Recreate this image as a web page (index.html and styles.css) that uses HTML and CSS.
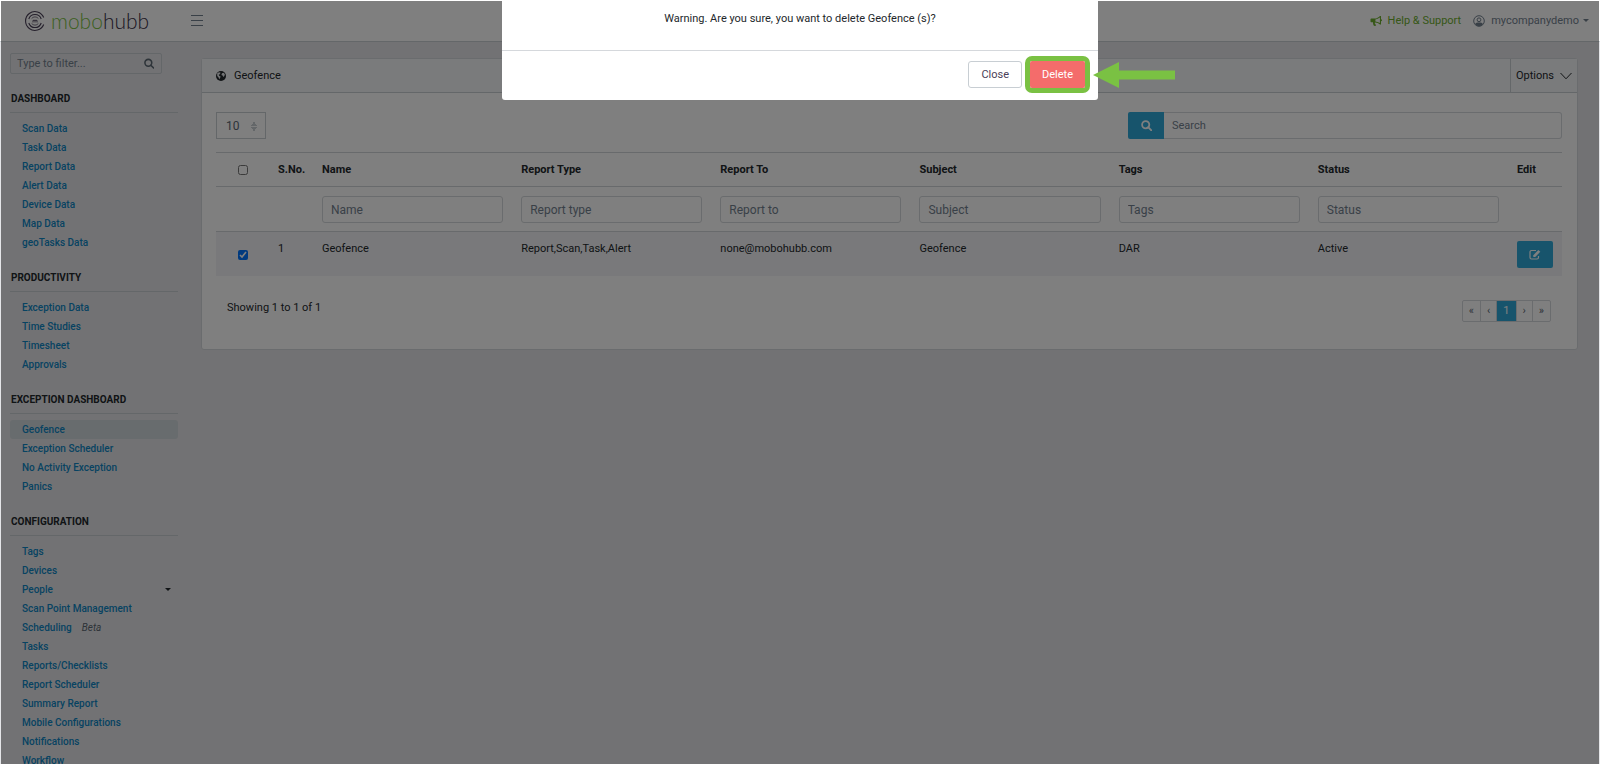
FILE: index.html
```
<!DOCTYPE html>
<html lang="en">
<head>
  <meta charset="UTF-8">
  <title>mobohubb - Geofence</title>
  <link rel="stylesheet" href="styles.css">
</head>
<body>

  <header class="app-header">
    <a class="brand" href="#">
      <svg width="20" height="20" viewBox="0 0 20 20" fill="none" stroke="#4a4058" stroke-width="1.1">
        <path d="M18.700 6.500A9.400 9.400 0 1 0 18.700 13.500"/>
        <path d="M16.200 8A6.500 6.500 0 0 0 3.800 8M3.800 12A6.500 6.500 0 0 0 16.200 12"/>
        <path d="M6.600 7.600A4.200 4.200 0 0 1 13.400 7.600M6.600 12.400A4.200 4.200 0 0 0 13.400 12.400" stroke-width=".7"/>
        <path d="M8 11.500V9.300h4v2.200M10 9.300v2.200" stroke-width=".9"/>
      </svg>
      <span class="brand-text"><span class="brand-green">mobo</span>hubb</span>
    </a>
    <button class="menu-toggle" type="button" aria-label="Toggle menu">
      <svg width="12" height="12" viewBox="0 0 12 12" stroke="#73818f" stroke-width="1"><path d="M0 .500h12M0 5.500h12M0 10.500h12"/></svg>
    </button>
    <nav class="header-nav">
      <a class="help-link" href="#">
        <svg width="12" height="12" viewBox="0 0 12 12" fill="currentColor"><path d="M11 1v8.500h-1C8.600 8.200 6.900 7.500 5.100 7.400c-.500.400-.400.900 0 1.400.2.700.7 1 1.100 1.500-.6.800-1.800.700-2.500.3C3.200 9.400 2.900 8.500 3 7.300H1.600C.9 7.300.5 6.900.5 6.300V4.600c0-.6.400-1 1.100-1h3.100C6.700 3.500 8.500 2.600 10 1zM9.900 2.500C8.500 3.600 7 4.300 5.400 4.500v2C7 6.600 8.500 7.200 9.900 8.100z" fill-rule="evenodd"/><path d="M11 4.300c.7.100 1 .500 1 1s-.300.900-1 1z"/></svg>
        Help &amp; Support
      </a>
      <a class="user-link" href="#">
        <svg width="12" height="12" viewBox="0 0 12 12"><circle cx="6" cy="6" r="5.300" fill="none" stroke="currentColor" stroke-width="1"/><circle cx="6" cy="4.800" r="1.900" fill="none" stroke="currentColor"/><path d="M2 9.300C2.700 7.900 4 7.600 6 7.600s3.300.300 4 1.700A5 5 0 0 1 6 11.300 5 5 0 0 1 2 9.300z" fill="currentColor"/></svg>
        mycompanydemo
        <span class="caret"></span>
      </a>
    </nav>
  </header>

  <div class="app-body">
    <aside class="sidebar">
      <form class="filter">
        <input type="text" placeholder="Type to filter..." aria-label="Type to filter">
        <svg width="11" height="11" viewBox="0 0 11 11" fill="none" stroke="#5c6873" stroke-width="1.700"><circle cx="4.700" cy="4.700" r="3.700"/><path d="M7.400 7.400l3 3" stroke-linecap="round"/></svg>
      </form>

      <h2>Dashboard</h2>
      <ul>
        <li><a href="#">Scan Data</a></li>
        <li><a href="#">Task Data</a></li>
        <li><a href="#">Report Data</a></li>
        <li><a href="#">Alert Data</a></li>
        <li><a href="#">Device Data</a></li>
        <li><a href="#">Map Data</a></li>
        <li><a href="#">geoTasks Data</a></li>
      </ul>

      <h2>Productivity</h2>
      <ul>
        <li><a href="#">Exception Data</a></li>
        <li><a href="#">Time Studies</a></li>
        <li><a href="#">Timesheet</a></li>
        <li><a href="#">Approvals</a></li>
      </ul>

      <h2>Exception Dashboard</h2>
      <ul>
        <li class="active"><a href="#">Geofence</a></li>
        <li><a href="#">Exception Scheduler</a></li>
        <li><a href="#">No Activity Exception</a></li>
        <li><a href="#">Panics</a></li>
      </ul>

      <h2>Configuration</h2>
      <ul>
        <li><a href="#">Tags</a></li>
        <li><a href="#">Devices</a></li>
        <li><a href="#">People</a><span class="caret"></span></li>
        <li><a href="#">Scan Point Management</a></li>
        <li><a href="#">Scheduling</a><em>Beta</em></li>
        <li><a href="#">Tasks</a></li>
        <li><a href="#">Reports/Checklists</a></li>
        <li><a href="#">Report Scheduler</a></li>
        <li><a href="#">Summary Report</a></li>
        <li><a href="#">Mobile Configurations</a></li>
        <li><a href="#">Notifications</a></li>
        <li><a href="#">Workflow</a></li>
      </ul>
    </aside>

    <main class="main">
      <section class="card">
        <div class="card-header">
          <svg width="10" height="10" viewBox="0 0 10 10"><circle cx="5" cy="5" r="5" fill="#23282c"/><path d="M1.200 2.300L3 1.300l1.600.500-.8 1.400-1 .600.400.900 1.400.800-.500 1.500-.900 1.200-.600-1.800L1.200 5zM6 2.300l1.600-.600 1.300 1.600-.500 1.700-1 1-.8-1.500-1.200-.600z" fill="#e4e7ea"/></svg>
          <h1>Geofence</h1>
          <button class="options" type="button">Options
            <svg width="12" height="8" viewBox="0 0 12 8" fill="none" stroke="currentColor" stroke-width="1"><path d="M.500 1L6 6.800 11.500 1"/></svg>
          </button>
        </div>

        <div class="card-body">
          <div class="toolbar">
            <select class="page-size" aria-label="Rows per page">
              <option>10</option>
              <option>25</option>
              <option>50</option>
            </select>
            <form class="search">
              <button class="btn-primary" type="button" aria-label="Search">
                <svg width="11" height="11" viewBox="0 0 11 11" fill="none" stroke="currentColor" stroke-width="1.800"><circle cx="4.700" cy="4.700" r="3.600"/><path d="M7.400 7.400l3 3" stroke-linecap="round"/></svg>
              </button>
              <input type="text" placeholder="Search" aria-label="Search text">
            </form>
          </div>

          <table>
            <colgroup>
              <col class="col-check">
              <col class="col-no">
              <col span="6">
              <col class="col-edit">
            </colgroup>
            <thead>
              <tr>
                <th class="check"><input type="checkbox" aria-label="Select all"></th>
                <th>S.No.</th>
                <th>Name</th>
                <th>Report Type</th>
                <th>Report To</th>
                <th>Subject</th>
                <th>Tags</th>
                <th>Status</th>
                <th>Edit</th>
              </tr>
              <tr>
                <td></td>
                <td></td>
                <td><input type="text" placeholder="Name" aria-label="Name"></td>
                <td><input type="text" placeholder="Report type" aria-label="Report type"></td>
                <td><input type="text" placeholder="Report to" aria-label="Report to"></td>
                <td><input type="text" placeholder="Subject" aria-label="Subject"></td>
                <td><input type="text" placeholder="Tags" aria-label="Tags"></td>
                <td><input type="text" placeholder="Status" aria-label="Status"></td>
                <td></td>
              </tr>
            </thead>
            <tbody>
              <tr>
                <td class="check"><input type="checkbox" aria-label="Select Geofence" checked></td>
                <td>1</td>
                <td>Geofence</td>
                <td>Report,Scan,Task,Alert</td>
                <td>none@mobohubb.com</td>
                <td>Geofence</td>
                <td>DAR</td>
                <td>Active</td>
                <td>
                  <button class="btn-primary" type="button" aria-label="Edit">
                    <svg width="12" height="11" viewBox="0 0 12 11" fill="none" stroke="currentColor"><path d="M7 1.500H2.500a1.500 1.500 0 0 0-1.500 1.500v5.500A1.500 1.500 0 0 0 2.500 10H8a1.500 1.500 0 0 0 1.500-1.500V7" stroke-width="1.200"/><path d="M4.300 8V6.200L9.300 1l2 1.800L6.200 8z" fill="currentColor" stroke="none"/></svg>
                  </button>
                </td>
              </tr>
            </tbody>
          </table>

          <div class="table-footer">
            <span>Showing 1 to 1 of 1</span>
            <nav class="pagination">
              <a href="#">«</a>
              <a href="#">‹</a>
              <a class="current" href="#">1</a>
              <a href="#">›</a>
              <a href="#">»</a>
            </nav>
          </div>
        </div>
      </section>
    </main>
  </div>

  <div class="backdrop"></div>

  <div class="modal" role="dialog" aria-modal="true" aria-labelledby="modal-text">
    <p class="modal-body" id="modal-text">Warning. Are you sure, you want to delete Geofence (s)?</p>
    <div class="modal-footer">
      <button class="btn-close" type="button">Close</button>
      <div class="callout">
        <button class="btn-delete" type="button">Delete</button>
        <svg class="arrow" width="82" height="26" viewBox="0 0 82 26"><path d="M0 13L26 0v8.500h56v9H26V26z" fill="#7ac143"/></svg>
      </div>
    </div>
  </div>

</body>
</html>
```
FILE: styles.css
```
* {
  box-sizing: border-box;
}

body {
  margin: 0;
  height: 100vh;
  display: flex;
  flex-direction: column;
  overflow: hidden;
  background: #e4e5e8;
  color: #23282c;
  font-family: Roboto, "Liberation Sans", sans-serif;
  font-size: 11px;
  line-height: 16px;
}

a {
  text-decoration: none;
  color: inherit;
}

button, input, select {
  font-family: inherit;
  font-size: 11px;
  line-height: 16px;
}

input[type="text"] {
  width: 100%;
  min-width: 0;
  height: 27px;
  padding: 0 8px;
  border: 1px solid #d5d8dc;
  border-radius: 3px;
  background: transparent;
  color: #5c6873;
}

input::placeholder {
  color: #73818f;
  opacity: 1;
}

input[type="checkbox"] {
  width: 10px;
  height: 10px;
  margin: 0;
}

.caret {
  width: 0;
  border: 3px solid transparent;
  border-top-color: currentColor;
  border-bottom: 0;
}

/* header */
.app-header {
  flex: none;
  display: flex;
  align-items: center;
  height: 42px;
  padding: 0 11px 0 25px;
  background: #fff;
  border-bottom: 1px solid #c8ced3;
}

.brand {
  display: flex;
  align-items: center;
  gap: 6px;
  width: 166px;
}

.brand-text {
  font-family: Lato, sans-serif;
  font-size: 21px;
  font-weight: 300;
  line-height: 24px;
  color: #3a3048;
}

.brand-green {
  color: #7ac143;
}

.menu-toggle {
  display: flex;
  padding: 0;
  border: 0;
  background: none;
}

.header-nav {
  display: flex;
  gap: 12px;
  margin-left: auto;
}

.header-nav a {
  display: flex;
  align-items: center;
  gap: 6px;
}

.help-link {
  color: #6cae2e;
}

.user-link {
  color: #73818f;
}

.user-link .caret {
  margin-left: -2px;
}

.app-body {
  flex: 1;
  display: flex;
  min-height: 0;
}

/* sidebar */
.sidebar {
  flex: none;
  width: 201px;
  padding: 11px 23px 0 10px;
  overflow: hidden;
}

.filter {
  display: flex;
  align-items: center;
  width: 152px;
  height: 21px;
  padding-right: 7px;
  border: 1px solid #c8ced3;
  border-radius: 2px;
}

.filter input[type="text"] {
  height: 19px;
  padding: 0 6px;
  border: 0;
}

.sidebar h2 {
  margin: 17px 0 6px;
  padding: 0 1px 5px;
  border-bottom: 1px solid #c8ced3;
  font-size: 10px;
  line-height: 16px;
  font-weight: 700;
  text-transform: uppercase;
}

.sidebar ul {
  margin: 0;
  padding: 0 0 1px;
  list-style: none;
}

.sidebar li {
  display: flex;
  align-items: center;
  height: 19px;
  padding: 0 7px 0 12px;
  border-radius: 3px;
  font-size: 10px;
}

.sidebar li a {
  color: #0f86c4;
  font-weight: 500;
}

.sidebar li .caret {
  margin-left: auto;
}

.sidebar li em {
  margin-left: 10px;
  color: #5c6873;
}

.sidebar .active {
  background: #d1d8dc;
}

/* main card */
.main {
  flex: 1;
  min-width: 0;
  padding: 16px 22px 0 0;
}

.card {
  background: #fff;
  border: 1px solid #d5d8dc;
  border-radius: 3px;
}

.card-header {
  display: flex;
  align-items: center;
  gap: 8px;
  height: 34px;
  padding-left: 14px;
  background: #f5f6f8;
  border-bottom: 1px solid #c8ced3;
}

.card-header h1 {
  margin: 0;
  font-size: 11px;
  font-weight: 400;
}

.options {
  display: flex;
  align-items: center;
  gap: 6px;
  height: 100%;
  margin-left: auto;
  padding: 0 5px;
  border: 0;
  border-left: 1px solid #c8ced3;
  background: none;
  color: #23282c;
}

.card-body {
  padding: 19px 15px 27px 14px;
}

.toolbar {
  display: flex;
  justify-content: space-between;
  margin-bottom: 13px;
}

.page-size {
  appearance: none;
  width: 50px;
  height: 27px;
  padding: 0 9px;
  border: 1px solid #c8ced3;
  border-radius: 0;
  color: #5c6873;
  font-size: 12px;
  background:
    linear-gradient(to top right, transparent 50%, #c8ced3 0) 34px 14px / 3px 5px no-repeat,
    linear-gradient(to top left, transparent 50%, #c8ced3 0) 37px 14px / 3px 5px no-repeat,
    linear-gradient(to bottom right, transparent 50%, #c8ced3 0) 34px 8px / 3px 5px no-repeat,
    linear-gradient(to bottom left, transparent 50%, #c8ced3 0) 37px 8px / 3px 5px no-repeat;
}

.search {
  display: flex;
  width: 434px;
}

.search input[type="text"] {
  border-left: 0;
  border-radius: 0 3px 3px 0;
}

.btn-primary {
  flex: none;
  display: flex;
  align-items: center;
  justify-content: center;
  width: 36px;
  height: 27px;
  padding: 0;
  border: 0;
  border-radius: 2px;
  background: #2fa9d9;
  color: #fff;
}

.search .btn-primary {
  border-radius: 2px 0 0 2px;
}

table {
  width: 100%;
  table-layout: fixed;
  border-collapse: collapse;
}

.col-check {
  width: 53px;
}

.col-no {
  width: 44px;
}

.col-edit {
  width: 54px;
}

th, td {
  padding: 9px 9px 8px;
  border-top: 1px solid #d0d4d9;
  text-align: left;
  vertical-align: top;
}

th {
  height: 34px;
  font-weight: 700;
}

th.check, td.check {
  text-align: center;
  vertical-align: middle;
}

td input[type="text"] {
  display: block;
  font-size: 12px;
}

.check input[type="checkbox"] {
  display: block;
  margin: 0 auto;
}

tbody tr {
  background: #f2f3f6;
}

.table-footer {
  display: flex;
  justify-content: space-between;
  align-items: flex-start;
  padding: 24px 11px 0;
}

.pagination {
  display: flex;
  border: 1px solid #d5d8dc;
  border-radius: 2px;
  color: #5c6873;
}

.pagination a {
  padding: 2px 6px;
  border-left: 1px solid #d5d8dc;
}

.pagination a:first-child {
  border-left: 0;
}

.pagination .current {
  background: #2fa9d9;
  color: #fff;
}

/* delete dialog */
.backdrop {
  position: fixed;
  inset: 1px 1px 0;
  background: rgba(0, 0, 0, 0.5);
}

.modal {
  position: fixed;
  top: 0;
  left: 50%;
  width: 596px;
  transform: translateX(-50%);
  background: #fff;
  border-radius: 0 0 3px 3px;
}

.modal-body {
  margin: 0;
  padding: 11px 10px 23px;
  border-bottom: 1px solid #d5d8dc;
  text-align: center;
}

.modal-footer {
  display: flex;
  justify-content: flex-end;
  gap: 3px;
  padding: 5px 8px 7px;
}

.modal-footer button {
  height: 27px;
  padding: 0 12px;
  border-radius: 3px;
}

.btn-close {
  margin: 5px 0;
  border: 1px solid #c8ced3;
  background: #fff;
  color: #4a4058;
}

.callout {
  position: relative;
  border: 5px solid #7ac143;
  border-radius: 7px;
}

.modal-footer .btn-delete {
  display: block;
  border: 0;
  border-radius: 2px;
  background: #f46c6b;
  color: #fff;
}

.arrow {
  position: absolute;
  top: 1px;
  left: calc(100% + 8px);
}
```
